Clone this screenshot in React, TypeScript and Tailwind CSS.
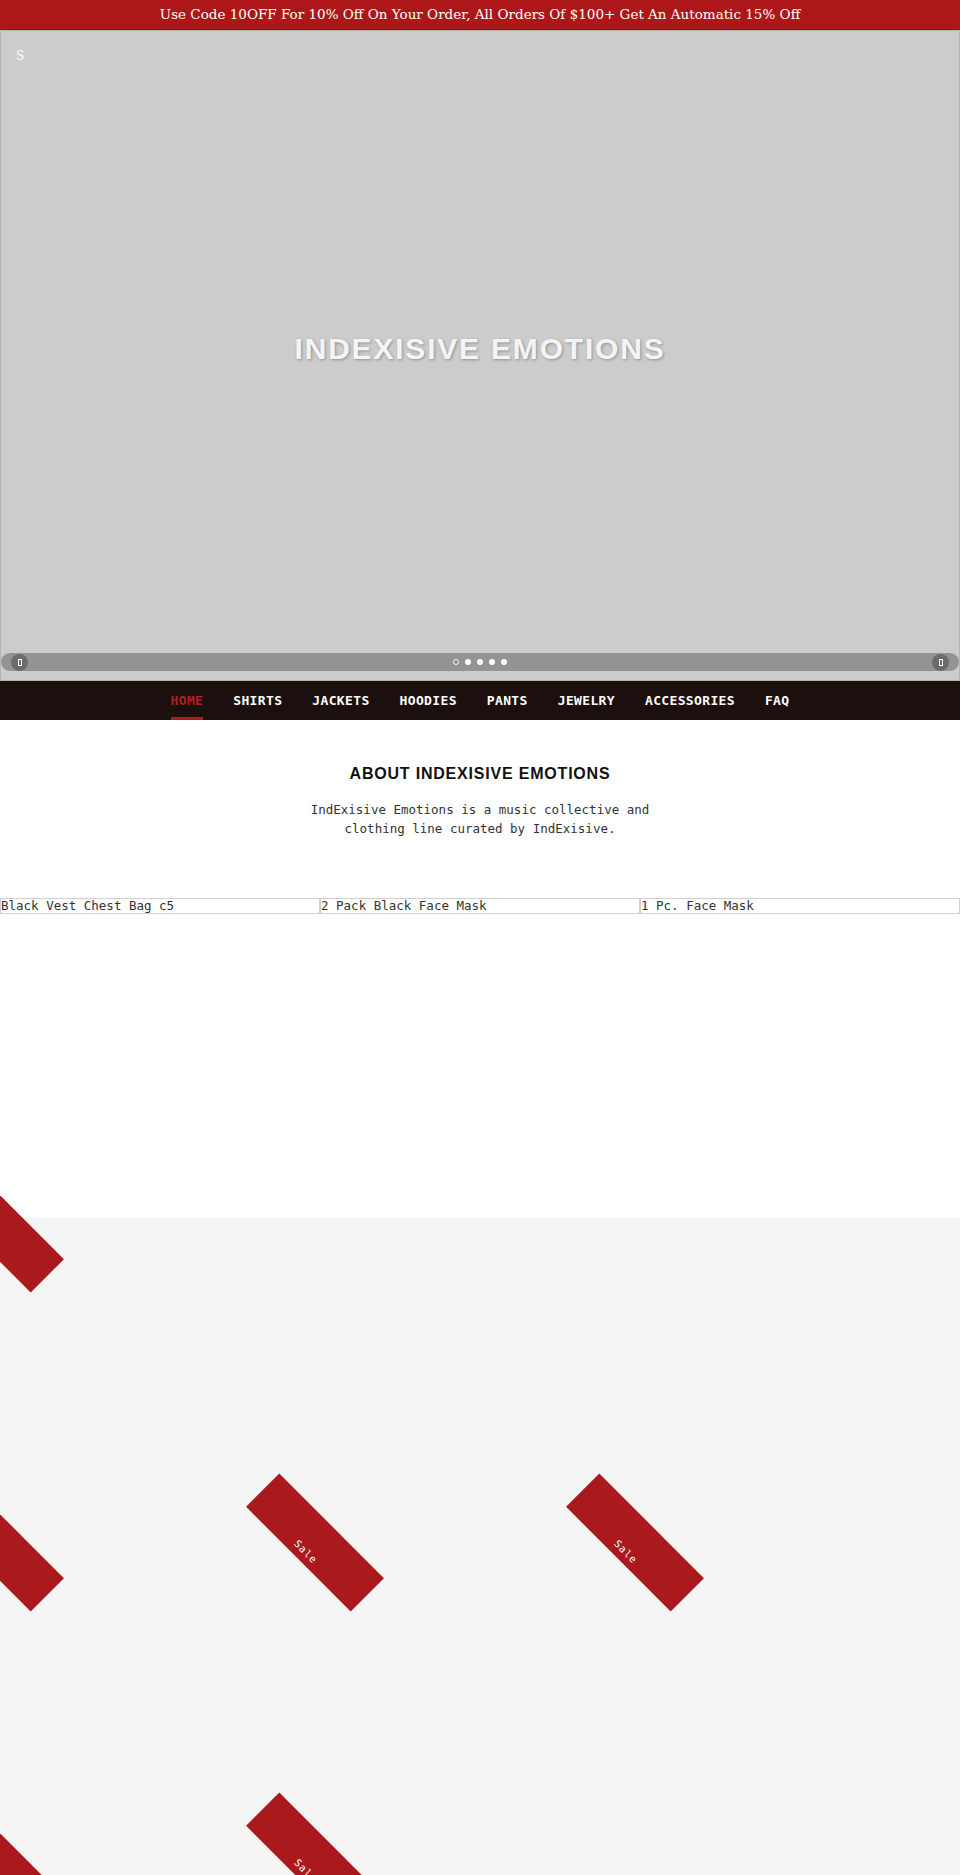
import React from "react";

const navItems = ["HOME", "SHIRTS", "JACKETS", "HOODIES", "PANTS", "JEWELRY", "ACCESSORIES", "FAQ"];

const products = ["Black Vest Chest Bag c5", "2 Pack Black Face Mask", "1 Pc. Face Mask"];

// which cards in the collection grid carry a sale ribbon, row by row
const saleGrid = [
  [true, false, false],
  [true, true, true],
  [true, true, false],
];

const mono = { fontFamily: '"DejaVu Sans Mono", monospace' };

const Tofu = () => <span className="block w-[4px] h-[7px] border border-white" />;

const SliderBar = () => (
  <div className="mb-[9px] h-[18px] rounded-full bg-[#939393] flex items-center justify-between px-[10px]">
    <div className="w-[17px] h-[17px] rounded-full bg-[#6b6b6b] flex items-center justify-center">
      <Tofu />
    </div>
    <div className="flex items-center gap-[6px]">
      <span className="w-[6px] h-[6px] rounded-full border-[1.5px] border-white bg-[#8a8a8a]" />
      <span className="w-[6px] h-[6px] rounded-full bg-white" />
      <span className="w-[6px] h-[6px] rounded-full bg-white" />
      <span className="w-[6px] h-[6px] rounded-full bg-white" />
      <span className="w-[6px] h-[6px] rounded-full bg-white" />
    </div>
    <div className="w-[17px] h-[17px] rounded-full bg-[#6b6b6b] flex items-center justify-center">
      <Tofu />
    </div>
  </div>
);

const SaleRibbon = () => (
  <div className="absolute left-[-79px] top-[-18px] w-[148px] h-[47px] rotate-45 bg-[#aa1a1c] flex items-end justify-center pb-[4px]">
    <span className="text-[10px] leading-[12px] tracking-[0.1em] text-white" style={mono}>
      Sale
    </span>
  </div>
);

export default function App() {
  return (
    <div className="w-full min-h-[1875px] bg-white">
      <div
        className="h-[30px] bg-[#ad1719] border-b border-[#8f1416] flex items-center justify-center text-white text-[13.5px]"
        style={{ fontFamily: '"DejaVu Serif", serif' }}
      >
        Use Code 10OFF For 10% Off On Your Order, All Orders Of $100+ Get An Automatic 15% Off
      </div>

      <div className="h-[651px] bg-[#cccccc] border border-[#b4b4b4] flex flex-col">
        <div
          className="pt-[18px] pl-[15px] text-white text-[12px] leading-[14px]"
          style={{ fontFamily: '"DejaVu Serif", serif' }}
        >
          S
        </div>
        <div className="flex-1 flex items-center justify-center pb-[20px]">
          <h1
            className="text-[30px] font-bold tracking-[1.8px] text-[#f4f4f4] [text-shadow:1px_1px_3px_rgba(0,0,0,0.3)]"
            style={{ fontFamily: '"Liberation Sans", Arial, sans-serif' }}
          >
            INDEXISIVE EMOTIONS
          </h1>
        </div>
        <SliderBar />
      </div>

      <nav className="h-[39px] bg-[#1c100e] flex justify-center gap-[30px]" style={mono}>
        {navItems.map((item) => (
          <a
            key={item}
            className={
              item === "HOME"
                ? "flex items-center pt-[3px] border-b-[3px] border-[#a51d1f] text-[#b01f22] text-[13px] font-bold tracking-[0.35px]"
                : "flex items-center pt-[3px] border-b-[3px] border-transparent text-white text-[13px] font-bold tracking-[0.35px]"
            }
          >
            {item}
          </a>
        ))}
      </nav>

      <section className="pt-[42px] h-[498px]">
        <h2
          className="text-center text-[16px] leading-[24px] font-bold tracking-[0.8px] text-[#111]"
          style={{ fontFamily: '"Liberation Sans", Arial, sans-serif' }}
        >
          ABOUT INDEXISIVE EMOTIONS
        </h2>
        <p
          className="mt-[14px] w-[345px] mx-auto text-center text-[12.5px] leading-[19px] text-[#333]"
          style={mono}
        >
          IndExisive Emotions is a music collective and clothing line curated by IndExisive.
        </p>
        <div className="mt-[60px] flex">
          {products.map((name) => (
            <div
              key={name}
              className="flex-1 h-[16px] border border-[#cfcfcf] text-[12.5px] leading-[14px] text-[#333]"
              style={mono}
            >
              {name}
            </div>
          ))}
        </div>
      </section>

      <section className="bg-[#f5f5f6] grid grid-cols-3">
        {saleGrid.flat().map((onSale, i) => (
          <div key={i} className="relative h-[319px]">
            {onSale && <SaleRibbon />}
          </div>
        ))}
      </section>
    </div>
  );
}
